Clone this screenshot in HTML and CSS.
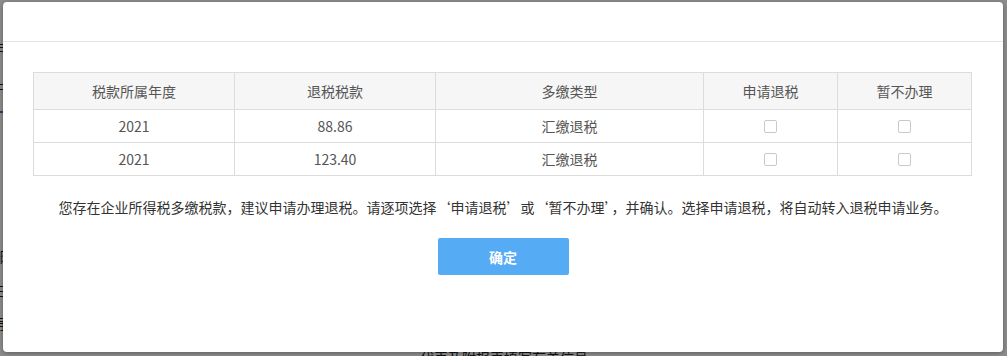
FILE: index.html
```html
<!DOCTYPE html>
<html lang="zh-CN">
<head>
<meta charset="utf-8">
<title>退税确认</title>
<link rel="stylesheet" href="styles.css">
</head>
<body>
<div class="page">
  <div class="page-line l1">申报</div>
  <div class="page-line l2">中</div>
  <div class="page-rule"></div>
  <div class="page-line l3">部</div>
  <div class="page-line l4">三</div>
  <div class="page-line l5">再</div>
  <div class="page-foot">代表及附报表填写有关信息</div>
</div>
<div class="mask"></div>
<div class="modal">
  <div class="modal-head"></div>
  <div class="modal-body">
    <table class="grid">
      <colgroup>
        <col class="c3"><col class="c3"><col class="c4"><col class="c2"><col class="c2">
      </colgroup>
      <thead>
        <tr><th>税款所属年度</th><th>退税税款</th><th>多缴类型</th><th>申请退税</th><th>暂不办理</th></tr>
      </thead>
      <tbody>
        <tr><td>2021</td><td>88.86</td><td>汇缴退税</td><td><span class="cb"></span></td><td><span class="cb"></span></td></tr>
        <tr><td>2021</td><td>123.40</td><td>汇缴退税</td><td><span class="cb"></span></td><td><span class="cb"></span></td></tr>
      </tbody>
    </table>
    <p class="msg">您存在企业所得税多缴税款，建议申请办理退税。请逐项选择‘申请退税’或‘暂不办理’，并确认。选择申请退税，将自动转入退税申请业务。</p>
    <div class="actions"><button class="btn">确定</button></div>
  </div>
</div>
</body>
</html>
```

FILE: styles.css
```css
html, body {
  margin: 0;
  padding: 0;
  width: 1007px;
  height: 356px;
  overflow: hidden;
  font-family: "Noto Sans CJK SC", "Microsoft YaHei", sans-serif;
}
body {
  position: relative;
  background: #fff;
}
.page {
  position: relative;
  height: 356px;
  color: #222;
  font-size: 14px;
}
.page-line {
  position: absolute;
  left: -8px;
}
.l1 { top: 38px; }
.l2 { top: 77px; }
.l3 { top: 246px; }
.l4 { top: 280px; }
.l5 { top: 313px; }
.page-rule {
  position: absolute;
  left: 0;
  top: 111px;
  width: 20px;
  height: 2px;
  background: #3a78c9;
}
.page-foot {
  position: absolute;
  left: 420px;
  top: 347px;
  font-size: 14px;
}
.mask {
  position: absolute;
  inset: 0;
  background: rgba(0, 0, 0, 0.45);
}
.modal {
  position: absolute;
  left: 3px;
  top: 2px;
  width: 1000px;
  height: 350px;
  background: #fff;
  border-radius: 4px;
  box-shadow: 0 1px 4px rgba(0, 0, 0, 0.35);
}
.modal-head {
  height: 39px;
  border-bottom: 1px solid #e5e5e5;
}
.modal-body {
  padding: 30px 30px 0;
}
.grid {
  width: 938px;
  border-collapse: collapse;
  table-layout: fixed;
  font-size: 14px;
  color: #555;
}
.c3 { width: 201px; }
.c4 { width: 268px; }
.c2 { width: 134px; }
.grid th, .grid td {
  border: 1px solid #dcdcdc;
  text-align: center;
  padding: 0;
  font-weight: normal;
}
.grid th {
  background: #f6f6f6;
  height: 36px;
}
.grid td {
  height: 32px;
}
.cb {
  display: inline-block;
  width: 11px;
  height: 11px;
  border: 1px solid #c9c9c9;
  border-radius: 2px;
  background: #fff;
  vertical-align: middle;
  position: relative;
  top: -2px;
}
.msg {
  margin: 21px 0 0;
  text-align: center;
  font-size: 14px;
  color: #333;
  line-height: 20px;
}
.actions {
  display: flex;
  justify-content: center;
  margin-top: 21px;
}
.btn {
  width: 131px;
  height: 37px;
  border: none;
  border-radius: 2px;
  background: #55acf5;
  color: #fff;
  font-family: inherit;
  font-size: 14px;
  font-weight: bold;
}
```
